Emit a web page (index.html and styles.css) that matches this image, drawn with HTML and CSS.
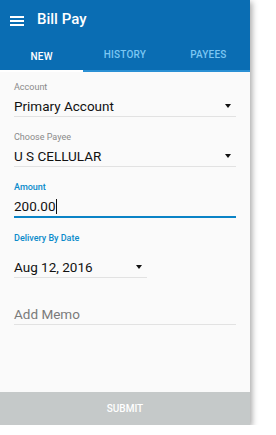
FILE: index.html
```html
<!DOCTYPE html>
<html>
<head>
<meta charset="utf-8">
<link rel="stylesheet" href="styles.css">
</head>
<body>
<div class="panel">
  <header class="appbar">
    <div class="toolbar">
      <svg class="menu" width="14" height="12" viewBox="0 0 14 12"><rect x="0" y="1" width="14" height="2" fill="#fff"/><rect x="0" y="5" width="14" height="2" fill="#fff"/><rect x="0" y="9" width="14" height="2" fill="#fff"/></svg>
      <span class="title">Bill Pay</span>
    </div>
    <nav class="tabs">
      <div class="tab active">NEW</div>
      <div class="tab">HISTORY</div>
      <div class="tab">PAYEES</div>
    </nav>
  </header>
  <main class="form">
    <div class="field">
      <div class="label">Account</div>
      <div class="value select"><span>Primary Account</span><span class="caret"></span></div>
    </div>
    <div class="field">
      <div class="label">Choose Payee</div>
      <div class="value select"><span>U S CELLULAR</span><span class="caret"></span></div>
    </div>
    <div class="field">
      <div class="label focus">Amount</div>
      <div class="value focused"><span>200.00</span><span class="cursor"></span></div>
    </div>
    <div class="field date">
      <div class="label focus">Delivery By Date</div>
      <div class="value select short"><span>Aug 12, 2016</span><span class="caret"></span></div>
    </div>
    <div class="field memo">
      <div class="value placeholder"><span>Add Memo</span></div>
    </div>
  </main>
  <button class="submit">SUBMIT</button>
</div>
</body>
</html>
```
FILE: styles.css
```css
* { box-sizing: border-box; }
html, body { margin: 0; padding: 0; background: #fff; }
body { font-family: Roboto, "Noto Sans", sans-serif; }
.panel {
  width: 250px;
  height: 425px;
  background: #fafafa;
  display: flex;
  flex-direction: column;
  box-shadow: 2px 2px 6px rgba(0,0,0,0.35);
}
.appbar { background: #0a6db3; }
.toolbar {
  height: 40px;
  display: flex;
  align-items: center;
  padding-left: 10px;
  padding-top: 1px;
}
.menu { display: block; }
.title {
  color: #fff;
  font-size: 15px;
  font-weight: 500;
  margin-left: 13px;
  padding-bottom: 4px;
}
.tabs {
  display: flex;
  height: 32px;
  border-bottom: 2px solid #2a90d4;
}
.tab {
  flex: 1;
  display: flex;
  align-items: center;
  justify-content: center;
  font-size: 10px;
  font-weight: 500;
  color: #7cc6f2;
  letter-spacing: 0.2px;
  padding-bottom: 2px;
}
.tab.active {
  color: #fff;
  box-shadow: inset 0 -2px 0 #fff;
  margin-bottom: -2px;
  padding-bottom: 0;
}
.form {
  flex: 1;
  padding: 9px 14px 0 14px;
  display: flex;
  flex-direction: column;
}
.field { margin-bottom: 14px; }
.label {
  font-size: 9px;
  line-height: 12px;
  color: #8a8a8a;
}
.label.focus { color: #0a8bcb; font-weight: 500; }
.value {
  margin-top: 3px;
  height: 20px;
  display: flex;
  align-items: center;
  justify-content: space-between;
  font-size: 13.5px;
  color: #111;
  border-bottom: 1px solid #e2e2e2;
  box-sizing: content-box;
}
.value.focused {
  border-bottom: 2px solid #0a83c6;
  justify-content: flex-start;
}
.cursor {
  width: 1px;
  height: 15px;
  background: #111;
  margin-left: 0;
}
.date .value { margin-top: 13px; }
.value.short { width: 133px; }
.memo { margin-top: 12px; }
.memo .value { margin-top: 0; }
.placeholder { color: #7a7a7a; }
.caret {
  width: 0;
  height: 0;
  border-left: 3.5px solid transparent;
  border-right: 3.5px solid transparent;
  border-top: 4px solid #111;
  margin-right: 5px;
}
.submit {
  height: 33px;
  border: 0;
  background: #c5c9c9;
  color: #fff;
  font-family: Roboto, sans-serif;
  font-size: 10px;
  font-weight: 500;
  padding: 0;
  width: 100%;
}
```
